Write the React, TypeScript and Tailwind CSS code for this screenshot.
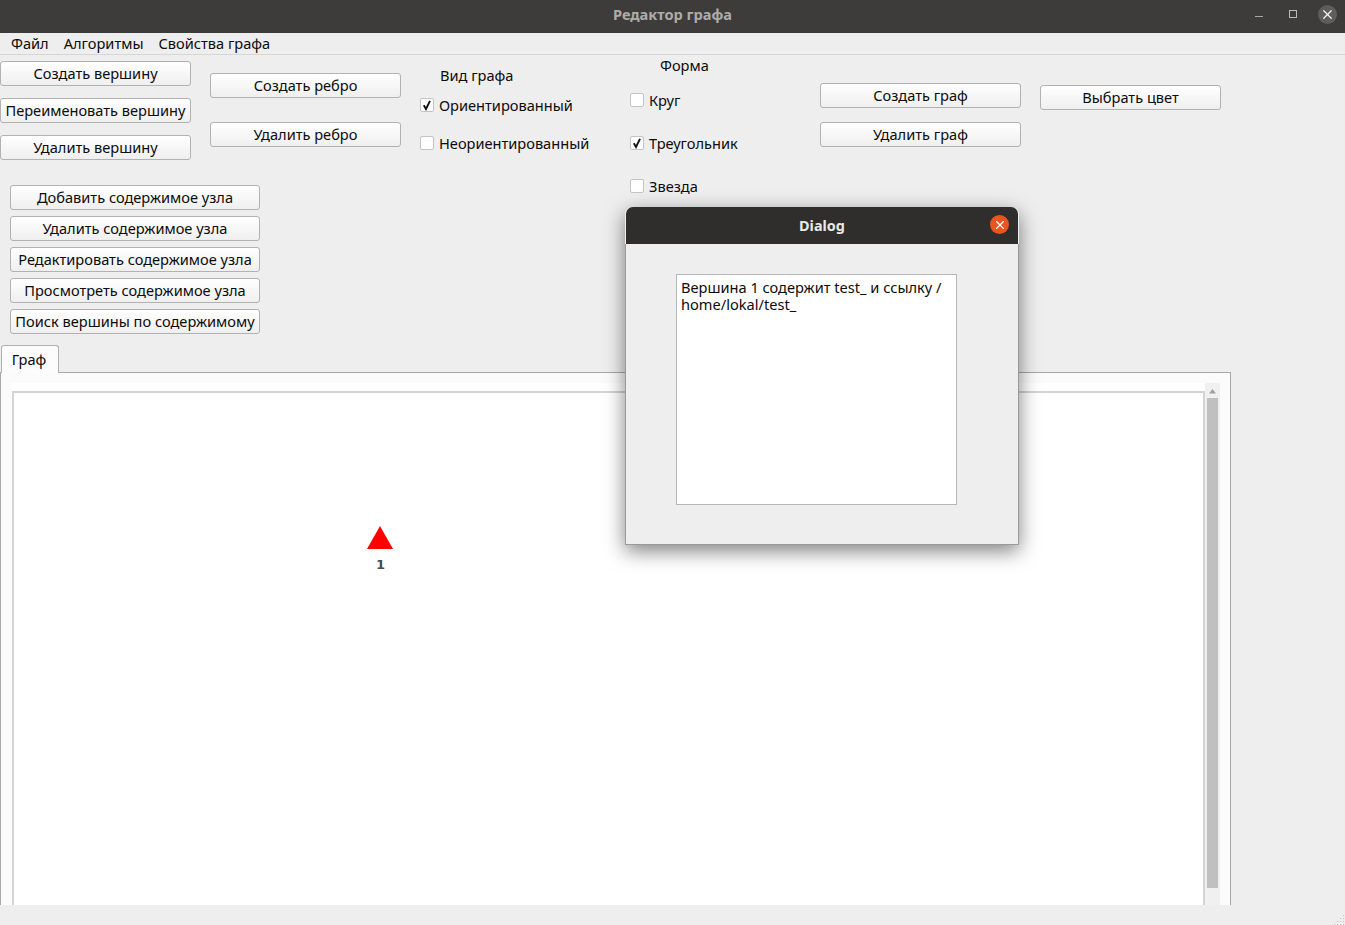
import { X } from "lucide-react";

const font = { fontFamily: '"Noto Sans", "Open Sans", sans-serif' };

function Btn({ label, w, className = "" }: { label: string; w: string; className?: string }) {
  return (
    <button
      className={`${w} ${className} h-[25px] shrink-0 flex items-center justify-center whitespace-nowrap rounded-[3px] border border-[#b2b2b2] bg-gradient-to-b from-[#ffffff] to-[#efefef] text-[14.6px] leading-none text-[#0c0c0c]`}
    >
      {label}
    </button>
  );
}

function Check({ label, checked, className = "" }: { label: string; checked?: boolean; className?: string }) {
  return (
    <div className={`${className} flex h-[20px] items-center gap-[5px] text-[14.6px] text-[#0c0c0c]`}>
      <span className="flex h-[14px] w-[14px] shrink-0 items-center justify-center rounded-[2px] border border-[#c4c4c4] bg-white">
        {checked && (
          <svg viewBox="0 0 12 12" className="h-[12px] w-[12px]">
            <path d="M2.8 6.2 L5 10 L9 1.8" fill="none" stroke="#111" strokeWidth="1.9" />
          </svg>
        )}
      </span>
      <span className="mt-[2px] whitespace-nowrap">{label}</span>
    </div>
  );
}

function TitleBar() {
  return (
    <div className="relative flex h-[33px] shrink-0 items-center justify-center bg-[#3d3c3a] pb-[3px]">
      <span className="text-[14.6px] font-bold text-[#aeaca8]">Редактор графа</span>
      <div className="absolute right-[8px] top-[5px] flex items-start">
        <span className="mr-[26px] mt-[11px] h-[1px] w-[8px] bg-[#a8a7a4]" />
        <span className="mr-[21px] mt-[5px] h-[8px] w-[8px] border border-[#bdbcb9]" />
        <span className="flex h-[19px] w-[19px] items-center justify-center rounded-full bg-[#5e5d5b]">
          <X size={15} strokeWidth={2} className="text-[#f2f2f2]" />
        </span>
      </div>
    </div>
  );
}

function MenuBar() {
  return (
    <div className="flex h-[22px] shrink-0 items-center gap-[15px] border-b border-[#d6d6d6] pl-[11px] text-[14.6px] text-[#0c0c0c]">
      <span>Файл</span>
      <span>Алгоритмы</span>
      <span>Свойства графа</span>
    </div>
  );
}

function Toolbar() {
  return (
    <div className="flex h-[290px] shrink-0 items-start">
      <div className="w-[420px] shrink-0">
        <div className="flex">
          <div className="flex flex-col gap-[12px] pt-[6px]">
            <Btn w="w-[191px]" label="Создать вершину" />
            <Btn w="w-[191px]" label="Переименовать вершину" />
            <Btn w="w-[191px]" label="Удалить вершину" />
          </div>
          <div className="ml-[19px] flex flex-col gap-[24px] pt-[18px]">
            <Btn w="w-[191px]" label="Создать ребро" />
            <Btn w="w-[191px]" label="Удалить ребро" />
          </div>
        </div>
        <div className="ml-[10px] mt-[25px] flex flex-col gap-[6px]">
          <Btn w="w-[250px]" label="Добавить содержимое узла" />
          <Btn w="w-[250px]" label="Удалить содержимое узла" />
          <Btn w="w-[250px]" label="Редактировать содержимое узла" />
          <Btn w="w-[250px]" label="Просмотреть содержимое узла" />
          <Btn w="w-[250px]" label="Поиск вершины по содержимому" />
        </div>
      </div>
      <div className="w-[210px] shrink-0 pt-[10px]">
        <div className="ml-[20px] h-[20px] text-[14.6px] leading-[20px] text-[#0c0c0c]">Вид графа</div>
        <Check className="mt-[10px]" label="Ориентированный" checked />
        <Check className="mt-[18px]" label="Неориентированный" />
      </div>
      <div className="w-[190px] shrink-0">
        <div className="ml-[30px] h-[20px] text-[14.6px] leading-[20px] text-[#0c0c0c]">Форма</div>
        <Check className="mt-[15px]" label="Круг" />
        <Check className="mt-[23px]" label="Треугольник" checked />
        <Check className="mt-[23px]" label="Звезда" />
      </div>
      <div className="flex w-[220px] shrink-0 flex-col gap-[14px] pt-[28px]">
        <Btn w="w-[201px]" label="Создать граф" />
        <Btn w="w-[201px]" label="Удалить граф" />
      </div>
      <div className="pt-[30px]">
        <Btn w="w-[181px]" label="Выбрать цвет" />
      </div>
    </div>
  );
}

function GraphTab() {
  return (
    <div className="relative min-h-0 flex-1 overflow-hidden">
      <div className="relative z-10 ml-[1px] flex h-[28px] w-[58px] items-center justify-center rounded-t-[3px] border border-b-0 border-[#b0b0b0] bg-[#fcfcfc] pr-[2px] text-[14.6px] text-[#0c0c0c]">
        Граф
      </div>
      <div className="mt-[-1px] h-[600px] w-[1231px] border border-[#a8a8a8] bg-[#fbfbfb] pl-[10px] pt-[10px]">
        <div className="flex h-full w-[1209px] bg-white">
          <div className="h-full w-[1194px] pl-[1px] pt-[8px]">
            <div className="relative h-full border-l-2 border-r-2 border-t-2 border-[#d4d4d4] bg-white">
              <svg className="absolute left-[352px] top-[133px]" width="28" height="24" viewBox="0 0 28 24">
                <polygon points="14,0 27,23 1,23" fill="#ff0000" />
              </svg>
              <span
                style={{ fontFamily: '"DejaVu Sans", sans-serif' }}
                className="absolute left-[362px] top-[165px] text-[13px] font-bold leading-none text-[#4a4a4a]"
              >
                1
              </span>
            </div>
          </div>
          <div className="flex h-full w-[15px] flex-col items-center bg-[#f0f0f0]">
            <svg className="mt-[6px]" width="7" height="5" viewBox="0 0 7 5">
              <polygon points="3.5,0 7,4.5 0,4.5" fill="#a0a0a0" />
            </svg>
            <div className="mt-[4px] h-[490px] w-[11px] bg-[#c0c0c0]" />
          </div>
        </div>
      </div>
    </div>
  );
}

function StatusBar() {
  return (
    <div className="relative h-[20px] shrink-0 bg-[#eeeeee]">
      <svg className="absolute bottom-0 right-0" width="11" height="11" viewBox="0 0 11 11" fill="#c4c4c4">
        <rect x="9" y="1" width="1" height="1" />
        <rect x="6" y="4" width="1" height="1" />
        <rect x="9" y="4" width="1" height="1" />
        <rect x="3" y="7" width="1" height="1" />
        <rect x="6" y="7" width="1" height="1" />
        <rect x="9" y="7" width="1" height="1" />
        <rect x="0" y="10" width="1" height="1" />
        <rect x="3" y="10" width="1" height="1" />
        <rect x="6" y="10" width="1" height="1" />
        <rect x="9" y="10" width="1" height="1" />
      </svg>
    </div>
  );
}

function ContentDialog() {
  return (
    <div className="absolute left-[625px] top-[207px] z-20 w-[394px] rounded-t-[7px] shadow-[0_6px_20px_rgba(0,0,0,0.5)]">
      <div className="relative mx-[1px] flex h-[37px] items-center justify-center rounded-t-[7px] bg-[#2f2e2c]">
        <span className="text-[14.4px] font-bold text-[#e8e8e8]">Dialog</span>
        <span className="absolute right-[9px] top-[8px] flex h-[19px] w-[19px] items-center justify-center rounded-full bg-[#e95420]">
          <X size={14} strokeWidth={2} className="text-white" />
        </span>
      </div>
      <div className="h-[301px] border border-t-0 border-[#9a9a9a] bg-[#eeeeee] pl-[50px] pt-[30px]">
        <div className="h-[231px] w-[281px] border border-[#b6b6b6] bg-white px-[4px] pt-[4px] text-[14.6px] leading-[17px] text-[#0c0c0c]">
          Вершина 1 содержит test_ и ссылку /
          <br />
          home/lokal/test_
        </div>
      </div>
    </div>
  );
}

export default function App() {
  return (
    <div style={font} className="relative flex h-[925px] w-[1345px] flex-col overflow-hidden bg-[#eeeeee]">
      <TitleBar />
      <MenuBar />
      <Toolbar />
      <GraphTab />
      <StatusBar />
      <ContentDialog />
    </div>
  );
}
